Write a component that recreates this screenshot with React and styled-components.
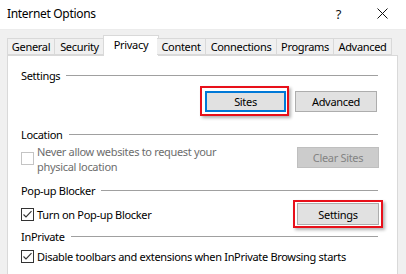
import React from 'react';
import styled, { createGlobalStyle } from 'styled-components';

const GlobalStyle = createGlobalStyle`
  html, body {
    margin: 0;
    padding: 0;
    background: #f0f0f0;
    overflow: hidden;
  }
  body {
    font-family: "Noto Sans", "Open Sans", sans-serif;
    font-size: 11px;
    letter-spacing: -0.32px;
    color: #000;
  }
`;

const tabs = [
  { label: 'General', w: 48 },
  { label: 'Security', w: 50 },
  { label: 'Privacy', w: 50, active: true },
  { label: 'Content', w: 49 },
  { label: 'Connections', w: 71 },
  { label: 'Programs', w: 57 },
  { label: 'Advanced', w: 58 },
];

const CheckIcon = () => (
  <svg width="11" height="11" viewBox="0 0 11 11">
    <path d="M1.5 5.5 L4 8 L9.5 2.2" fill="none" stroke="#333" strokeWidth="1.1" />
  </svg>
);

const Check = ({ checked, disabled }) => (
  <CheckBox $disabled={disabled}>{checked ? <CheckIcon /> : null}</CheckBox>
);

const Group = ({ title }) => (
  <GroupHeader>
    <span>{title}</span>
    <Rule />
  </GroupHeader>
);

export default function App() {
  return (
    <>
      <GlobalStyle />
      <Window>
        <TitleBar>
          <Title>Internet Options</Title>
          <Caption>
            <HelpGlyph>?</HelpGlyph>
            <svg width="11" height="11" viewBox="0 0 11 11">
              <path d="M0.5 0.5 L10.5 10.5 M10.5 0.5 L0.5 10.5" stroke="#111" strokeWidth="1" />
            </svg>
          </Caption>
        </TitleBar>

        <Body>
          <TabStrip>
            {tabs.map((t) => (
              <Tab key={t.label} $active={t.active} style={{ width: t.w }}>
                {t.label}
              </Tab>
            ))}
          </TabStrip>

          <Panel>
            <Group title="Settings" />
            <ButtonRow>
              <Highlight $inset="-5px -3px -4px -5px">
                <Button $focused style={{ width: 81 }}>Sites</Button>
              </Highlight>
              <Button style={{ width: 82, marginRight: 2 }}>Advanced</Button>
            </ButtonRow>

            <GroupSpacer $top={15}>
              <Group title="Location" />
            </GroupSpacer>
            <OptionRow $top={5} $align="flex-start">
              <CheckLabel $disabled>
                <Check disabled />
                <Lines>
                  <Line>Never allow websites to request your</Line>
                  <Line>physical location</Line>
                </Lines>
              </CheckLabel>
              <Button disabled style={{ width: 82 }}>Clear Sites</Button>
            </OptionRow>

            <GroupSpacer $top={9}>
              <Group title="Pop-up Blocker" />
            </GroupSpacer>
            <OptionRow $top={5} $align="center">
              <CheckLabel>
                <Check checked />
                <span>Turn on Pop-up Blocker</span>
              </CheckLabel>
              <Highlight $inset="-3px -4px -3px -4px">
                <Button $tall style={{ width: 82 }}>Settings</Button>
              </Highlight>
            </OptionRow>

            <GroupSpacer $top={4}>
              <Group title="InPrivate" />
            </GroupSpacer>
            <OptionRow $top={6} $align="center">
              <CheckLabel>
                <Check checked />
                <span>Disable toolbars and extensions when InPrivate Browsing starts</span>
              </CheckLabel>
            </OptionRow>
          </Panel>
        </Body>
      </Window>
    </>
  );
}

const Window = styled.div`
  width: 406px;
  height: 274px;
  display: flex;
  flex-direction: column;
  overflow: hidden;
`;

const TitleBar = styled.div`
  height: 29px;
  flex: none;
  background: #fff;
  border-bottom: 1px solid #ececec;
  display: flex;
  align-items: center;
  justify-content: space-between;
  padding: 0 0 0 7px;
`;

const Title = styled.div`
  font-size: 12px;
  margin-top: -2px;
`;

const Caption = styled.div`
  display: flex;
  align-items: center;
  gap: 36px;
  padding-right: 18px;
  margin-top: -2px;
`;

const HelpGlyph = styled.span`
  font-size: 13px;
  color: #111;
`;

const Body = styled.div`
  flex: 1;
  display: flex;
  flex-direction: column;
  padding: 6px 8px 0 7px;
`;

const TabStrip = styled.div`
  display: flex;
  align-items: flex-end;
  height: 20px;
  position: relative;
  z-index: 1;
  margin-bottom: -1px;
`;

const Tab = styled.div`
  height: 17px;
  margin: ${(p) => (p.$active ? '0 -2px 0' : '0 0 1px')};
  padding: ${(p) => (p.$active ? '0 2px 3px' : '0')};
  background: ${(p) => (p.$active ? '#fff' : '#f0f0f0')};
  border: 1px solid #d9d9d9;
  border-bottom: ${(p) => (p.$active ? 'none' : '1px solid #d9d9d9')};
  border-left: ${(p) => (p.$active ? '1px solid #d9d9d9' : 'none')};
  display: flex;
  align-items: center;
  justify-content: center;
  line-height: 1;
  white-space: nowrap;
  box-sizing: ${(p) => (p.$active ? 'content-box' : 'border-box')};

  &:first-child {
    border-left: 1px solid #d9d9d9;
  }
`;

const Panel = styled.div`
  flex: 1;
  background: #fff;
  border: 1px solid #d9d9d9;
  border-bottom: none;
  padding: 12px 18px 0 13px;
`;

const GroupHeader = styled.div`
  display: flex;
  align-items: center;
  gap: 6px;
  height: 15px;
  line-height: 15px;
  padding-right: 1px;
`;

const Rule = styled.div`
  flex: 1;
  height: 1px;
  background: #a0a0a0;
`;

const GroupSpacer = styled.div`
  margin-top: ${(p) => p.$top}px;
`;

const ButtonRow = styled.div`
  display: flex;
  justify-content: flex-end;
  align-items: center;
  gap: 9px;
  margin-top: 8px;
`;

const OptionRow = styled.div`
  display: flex;
  justify-content: space-between;
  align-items: ${(p) => p.$align};
  margin-top: ${(p) => p.$top}px;
`;

const CheckLabel = styled.label`
  display: flex;
  align-items: ${(p) => (p.$disabled ? 'flex-start' : 'center')};
  gap: 3px;
  line-height: 13px;
  color: ${(p) => (p.$disabled ? '#6d6d6d' : '#000')};

  & > div:first-child {
    margin-top: ${(p) => (p.$disabled ? '5px' : '0')};
  }
`;

const Lines = styled.div`
  display: flex;
  flex-direction: column;
  margin-top: -3px;
`;

const Line = styled.span`
  display: block;
  line-height: 15px;
`;

const CheckBox = styled.div`
  box-sizing: border-box;
  width: 13px;
  height: 13px;
  flex: none;
  border: 1px solid ${(p) => (p.$disabled ? '#c4c4c4' : '#333')};
  background: #fff;
  display: flex;
  align-items: center;
  justify-content: center;
`;

const Button = styled.button`
  box-sizing: border-box;
  height: ${(p) => (p.$tall ? '22px' : '21px')};
  font: inherit;
  font-size: 11px;
  letter-spacing: inherit;
  padding: 0;
  background: ${(p) => (p.disabled ? '#cccccc' : '#e1e1e1')};
  color: ${(p) => (p.disabled ? '#838383' : '#000')};
  border: ${(p) => (p.$focused ? '2px solid #0078d7' : p.disabled ? '1px solid #bfbfbf' : '1px solid #adadad')};
  border-radius: 0;
`;

const Highlight = styled.div`
  position: relative;
  display: flex;

  &::after {
    content: '';
    position: absolute;
    inset: ${(p) => p.$inset};
    border: 2px solid #e8101a;
    box-shadow: 2px 2px 3px rgba(0, 0, 0, 0.3);
    pointer-events: none;
  }
`;
